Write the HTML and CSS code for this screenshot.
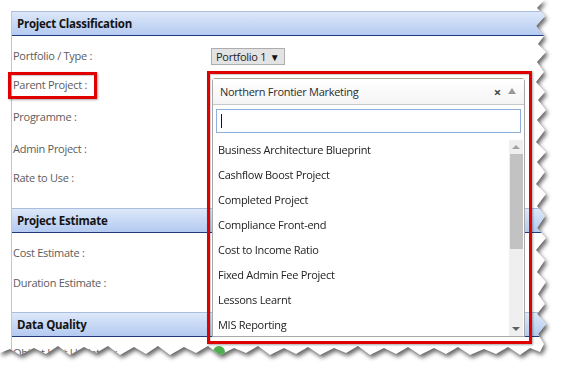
FILE: index.html
```html
<!DOCTYPE html>
<html>
<head>
<meta charset="utf-8">
<link rel="stylesheet" href="styles.css">
</head>
<body>
<div class="shadow">
  <div class="sheet">
    <div class="panel">
      <div class="section-head">Project Classification</div>
      <div class="fields fields-class">
        <div class="label">Portfolio / Type :</div>
        <div class="value"><span class="mini-select">Portfolio 1 <span class="caret">▼</span></span></div>
        <div class="label">Parent Project :</div>
        <div class="value"></div>
        <div class="label">Programme :</div>
        <div class="value"></div>
        <div class="label">Admin Project :</div>
        <div class="value"></div>
        <div class="label">Rate to Use :</div>
        <div class="value"></div>
      </div>
      <div class="section-head">Project Estimate</div>
      <div class="fields fields-est">
        <div class="label">Cost Estimate :</div>
        <div class="value"></div>
        <div class="label">Duration Estimate :</div>
        <div class="value"></div>
      </div>
      <div class="section-head">Data Quality</div>
      <div class="fields fields-dq">
        <div class="label">Object Last Updated :</div>
        <div class="value"><span class="dot"></span></div>
      </div>
    </div>

    <div class="dropdown">
      <div class="selection">
        <span class="sel-text">Northern Frontier Marketing</span>
        <span class="sel-clear">×</span>
        <span class="sel-arrow"></span>
      </div>
      <div class="search-wrap">
        <div class="search"><span class="cursor"></span></div>
      </div>
      <div class="results">
        <ul class="items">
          <li>Business Architecture Blueprint</li>
          <li>Cashflow Boost Project</li>
          <li>Completed Project</li>
          <li>Compliance Front-end</li>
          <li>Cost to Income Ratio</li>
          <li>Fixed Admin Fee Project</li>
          <li>Lessons Learnt</li>
          <li>MIS Reporting</li>
        </ul>
        <div class="scrollbar">
          <span class="sb-up"></span>
          <span class="sb-thumb"></span>
          <span class="sb-space"></span>
          <span class="sb-down"></span>
        </div>
      </div>
    </div>

    <div class="mark mark-label"></div>
    <div class="mark mark-drop"></div>
  </div>
</div>
</body>
</html>
```

FILE: styles.css
```css
html, body {
  margin: 0;
  padding: 0;
  background: #ffffff;
}

body {
  font-family: "Open Sans", "Noto Sans", sans-serif;
  font-size: 11px;
  letter-spacing: -0.28px;
  color: #333;
  width: 563px;
  height: 378px;
  overflow: hidden;
}

.shadow {
  filter: drop-shadow(2px 3px 2px rgba(0, 0, 0, 0.6));
  width: 560px;
}

.sheet {
  position: relative;
  width: 556px;
  height: 362px;
  background: #fff;
  padding: 11px 0 0 11px;
  box-sizing: border-box;
  clip-path: polygon(0 0, 544px 0, 537px 8px, 545px 16px, 536px 26px, 544px 36px, 538px 44px, 546px 52px, 537px 62px, 544px 72px, 536px 82px, 545px 92px, 538px 100px, 546px 110px, 537px 120px, 545px 130px, 536px 142px, 546px 152px, 537px 162px, 545px 172px, 536px 184px, 546px 194px, 537px 206px, 545px 216px, 537px 228px, 546px 238px, 536px 250px, 545px 260px, 537px 272px, 546px 282px, 538px 294px, 545px 304px, 537px 314px, 546px 324px, 538px 334px, 544px 344px, 540px 352px, 530px 348px, 520px 355px, 508px 347px, 496px 354px, 484px 349px, 470px 355px, 458px 347px, 446px 354px, 434px 348px, 420px 355px, 408px 347px, 396px 354px, 384px 348px, 370px 355px, 358px 346px, 346px 353px, 334px 348px, 320px 355px, 308px 347px, 296px 354px, 284px 348px, 270px 355px, 258px 346px, 246px 353px, 234px 348px, 220px 355px, 208px 346px, 196px 353px, 184px 347px, 170px 355px, 158px 346px, 146px 354px, 134px 347px, 120px 355px, 108px 346px, 96px 353px, 84px 347px, 70px 355px, 58px 346px, 46px 354px, 34px 348px, 20px 355px, 10px 349px, 0 353px);
}

.panel {
  width: 560px;
  height: 360px;
  border-left: 1px solid #b9c7dd;
  box-sizing: border-box;
}

.section-head {
  height: 25px;
  box-sizing: border-box;
  border-top: 1px solid #a9bddf;
  border-bottom: 1px solid #1f3b78;
  background: linear-gradient(#dde8f9, #b4caf1);
  font-weight: 700;
  font-size: 11.5px;
  letter-spacing: -0.25px;
  color: #141414;
  line-height: 23px;
  padding-left: 5px;
}

.fields {
  display: grid;
  grid-template-columns: 198px 1fr;
  align-items: center;
  padding-left: 1px;
}

.fields-class {
  grid-template-rows: 30px 28px 36px 28px 30px;
  padding-top: 5px;
  padding-bottom: 15px;
}

.fields-est {
  grid-template-rows: 30px 29px;
  padding-top: 5px;
  padding-bottom: 15px;
}

.fields-dq {
  grid-template-rows: 32px;
}

.label {
  color: #5c5c5c;
  line-height: 16px;
}

.mini-select {
  display: inline-block;
  box-sizing: border-box;
  width: 74px;
  height: 17px;
  line-height: 15px;
  border: 1px solid #adadad;
  background: #e3e3e3;
  color: #222;
  padding-left: 4px;
}

.caret {
  font-size: 10px;
  color: #111;
  margin-left: 1px;
}

.dot {
  display: inline-block;
  width: 12px;
  height: 12px;
  border-radius: 50%;
  background: #4cae4c;
  margin-left: 2px;
}

.dropdown {
  position: absolute;
  left: 212px;
  top: 78px;
  width: 313px;
  height: 259px;
  box-sizing: border-box;
  border: 1px solid #a8a8a8;
  border-radius: 3px 3px 0 0;
  background: #fff;
  display: flex;
  flex-direction: column;
}

.selection {
  height: 26px;
  box-sizing: border-box;
  display: flex;
  align-items: center;
  padding-left: 7px;
  padding-right: 8px;
  border-bottom: 1px solid #c8c8c8;
  background: linear-gradient(#ffffff, #f4f4f4);
  color: #2c2c2c;
}

.sel-text {
  flex: 1;
}

.sel-clear {
  font-size: 13px;
  font-weight: 700;
  color: #444;
  margin-right: 7px;
  line-height: 12px;
}

.sel-arrow {
  width: 0;
  height: 0;
  border-left: 4px solid transparent;
  border-right: 4px solid transparent;
  border-bottom: 6px solid #9a9a9a;
  margin-top: -2px;
}

.search-wrap {
  padding: 4px 3px 0 3px;
}

.search {
  height: 24px;
  box-sizing: border-box;
  border: 1px solid #8fb0dc;
  display: flex;
  align-items: center;
  padding-left: 4px;
}

.cursor {
  width: 1px;
  height: 14px;
  background: #111;
}

.results {
  flex: 1;
  display: flex;
  min-height: 0;
  padding-top: 4px;
}

.items {
  list-style: none;
  margin: 0;
  padding: 0 0 0 5px;
  flex: 1;
  overflow: hidden;
}

.items li {
  height: 25px;
  line-height: 25px;
  color: #222;
  white-space: nowrap;
}

.scrollbar {
  width: 14px;
  margin: 3px 1px 0 0;
  background: #efefef;
  display: flex;
  flex-direction: column;
  align-items: center;
}

.sb-up, .sb-down {
  height: 14px;
  width: 14px;
  display: flex;
  align-items: center;
  justify-content: center;
  flex: none;
}

.sb-up::before {
  content: "";
  border-left: 4px solid transparent;
  border-right: 4px solid transparent;
  border-bottom: 4px solid #a3a3a3;
}

.sb-down::before {
  content: "";
  border-left: 4px solid transparent;
  border-right: 4px solid transparent;
  border-top: 4px solid #606060;
}

.sb-thumb {
  width: 13px;
  height: 95px;
  background: #c2c2c2;
  flex: none;
}

.sb-space {
  flex: 1;
}

.mark {
  position: absolute;
  border: 3px solid #e00000;
  box-sizing: border-box;
  box-shadow: 1px 1px 2px rgba(0, 0, 0, 0.35), inset 1px 1px 1px rgba(0, 0, 0, 0.2);
}

.mark-label {
  left: 8px;
  top: 72px;
  width: 89px;
  height: 27px;
}

.mark-drop {
  left: 207px;
  top: 71px;
  width: 325px;
  height: 273px;
}
```
